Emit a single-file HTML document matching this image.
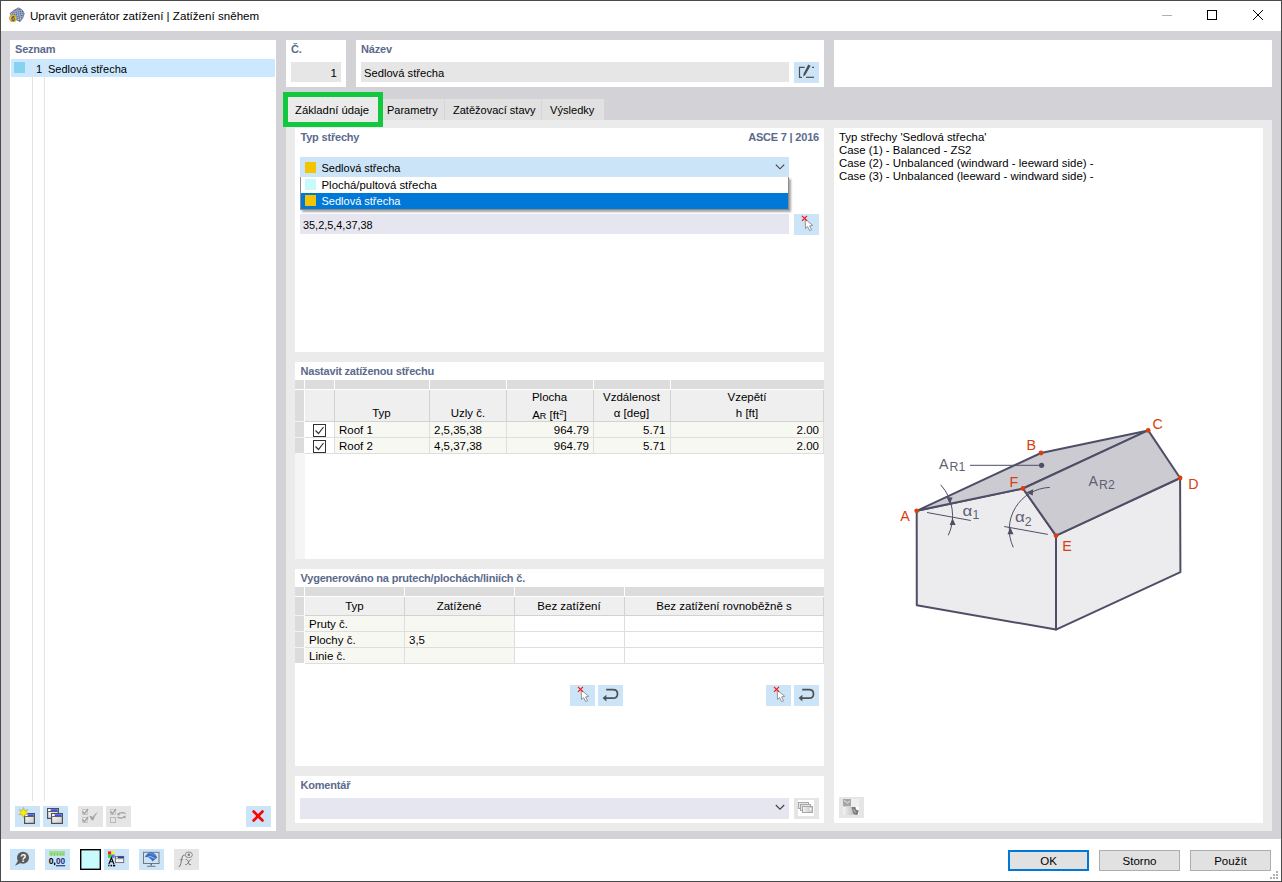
<!DOCTYPE html>
<html><head><meta charset="utf-8">
<style>
*{box-sizing:border-box;margin:0;padding:0}
html,body{width:1282px;height:882px;overflow:hidden;background:#fff}
body{position:relative;font-family:"Liberation Sans",sans-serif;font-size:11.5px;color:#000}
.a{position:absolute}
.t{position:absolute;white-space:nowrap;line-height:14px}
svg{position:absolute;overflow:visible}
</style></head><body>
<div class="a" style="left:0px;top:0px;width:1282px;height:882px;background:#d2d2d7;"></div>
<div class="a" style="left:0px;top:0px;width:1282px;height:1px;background:#4a4a4a;"></div>
<div class="a" style="left:0px;top:881px;width:1282px;height:1px;background:#4a4a4a;"></div>
<div class="a" style="left:0px;top:0px;width:1px;height:882px;background:#4a4a4a;"></div>
<div class="a" style="left:1281px;top:0px;width:1px;height:882px;background:#4a4a4a;"></div>
<div class="a" style="left:1px;top:1px;width:1280px;height:30px;background:#fff;"></div>
<div class="t" style="left:30px;top:9.17px;font-size:11.6px;">Upravit generátor zatížení | Zatížení sněhem</div>
<div class="a" style="left:1px;top:839px;width:1280px;height:42px;background:#fff;"></div>
<div class="a" style="left:10px;top:40px;width:266px;height:791px;background:#fff;"></div>
<div class="t" style="left:15px;top:42.06px;font-size:11px;font-weight:bold;color:#5b6a8c;letter-spacing:-0.2px;">Seznam</div>
<div class="a" style="left:11px;top:59px;width:264px;height:18px;background:#cce8ff;"></div>
<div class="a" style="left:14px;top:62px;width:11px;height:11px;background:#87d2f0;"></div>
<div class="a" style="left:32px;top:59px;width:1px;height:742px;background:#e3e3e3;"></div>
<div class="a" style="left:44px;top:59px;width:1px;height:742px;background:#e3e3e3;"></div>
<div class="t" style="left:36px;top:62.00px;font-size:11.2px;">1</div>
<div class="t" style="left:48px;top:62.06px;font-size:11px;">Sedlová střecha</div>
<div class="a" style="left:286px;top:40px;width:60px;height:47px;background:#fff;"></div>
<div class="t" style="left:291px;top:42.06px;font-size:11px;font-weight:bold;color:#5b6a8c;letter-spacing:-0.2px;">Č.</div>
<div class="a" style="left:291px;top:62px;width:50px;height:20px;background:#e6e6e6;"></div>
<div class="t" style="right:945px;top:65.70px;font-size:11.5px;">1</div>
<div class="a" style="left:356px;top:40px;width:468px;height:47px;background:#fff;"></div>
<div class="t" style="left:361px;top:42.06px;font-size:11px;font-weight:bold;color:#5b6a8c;letter-spacing:-0.2px;">Název</div>
<div class="a" style="left:361px;top:62px;width:428px;height:20px;background:#e6e6e6;"></div>
<div class="t" style="left:364px;top:65.80px;font-size:11.2px;">Sedlová střecha</div>
<div class="a" style="left:794px;top:62px;width:25px;height:21px;background:#cce4f7;"></div>
<div class="a" style="left:834px;top:40px;width:438px;height:47px;background:#fff;"></div>
<div class="a" style="left:286px;top:120px;width:986px;height:711px;background:#ebebeb;"></div>
<div class="a" style="left:383px;top:99px;width:221px;height:21px;background:#e1e1e1;"></div>
<div class="a" style="left:444px;top:99px;width:1px;height:21px;background:#d6d6d6;"></div>
<div class="a" style="left:541px;top:99px;width:1px;height:21px;background:#d6d6d6;"></div>
<div class="t" style="left:387px;top:103.36px;font-size:11px;">Parametry</div>
<div class="t" style="left:453px;top:103.36px;font-size:11px;">Zatěžovací stavy</div>
<div class="t" style="left:550px;top:103.33px;font-size:11.1px;">Výsledky</div>
<div class="a" style="left:283px;top:92px;width:100px;height:35px;border:5px solid #12c83e;background:#ebebeb"></div>
<div class="t" style="left:295px;top:103.27px;font-size:11.3px;">Základní údaje</div>
<div class="a" style="left:295px;top:128px;width:529px;height:224px;background:#fff;"></div>
<div class="t" style="left:300.5px;top:130.36px;font-size:11px;font-weight:bold;color:#5b6a8c;letter-spacing:-0.2px;">Typ střechy</div>
<div class="t" style="right:463px;top:130.36px;font-size:11px;font-weight:bold;color:#5b6a8c;letter-spacing:-0.2px;">ASCE 7 | 2016</div>
<div class="a" style="left:300px;top:157px;width:489px;height:20px;background:#cce4f7;"></div>
<div class="a" style="left:305px;top:162px;width:11px;height:11px;background:#f5c400;"></div>
<div class="t" style="left:321.5px;top:161.36px;font-size:11px;">Sedlová střecha</div>
<svg style="left:0;top:0" width="1282" height="882"><polyline points="775.8,164.6 780,168.8 784.2,164.6" fill="none" stroke="#404040" stroke-width="1.1"/></svg>
<div class="a" style="left:300px;top:214px;width:489px;height:20px;background:#e6e6f0;"></div>
<div class="t" style="left:303px;top:218.40px;font-size:10.9px;">35,2,5,4,37,38</div>
<div class="a" style="left:794px;top:214px;width:25px;height:21px;background:#cce4f7;"></div>
<div class="a" style="left:300px;top:177px;width:489px;height:33px;background:#fff;border:1px solid #8c8c8c;border-top:none;box-shadow:2px 2px 2px rgba(0,0,0,0.35)"></div>
<div class="a" style="left:301px;top:193px;width:487px;height:16px;background:#0078d7;"></div>
<div class="a" style="left:305px;top:179px;width:11px;height:11px;background:#c8fafc;"></div>
<div class="t" style="left:321.5px;top:178.23px;font-size:11.4px;">Plochá/pultová střecha</div>
<div class="a" style="left:305px;top:195px;width:11px;height:11px;background:#f5c400;"></div>
<div class="t" style="left:321.5px;top:194.36px;font-size:11px;color:#fff;">Sedlová střecha</div>
<div class="a" style="left:295px;top:362px;width:529px;height:197px;background:#fff;"></div>
<div class="t" style="left:300.5px;top:364.16px;font-size:11px;font-weight:bold;color:#5b6a8c;letter-spacing:-0.2px;">Nastavit zatíženou střechu</div>
<div class="a" style="left:295px;top:380px;width:9px;height:9px;background:#dcdcdc;"></div>
<div class="a" style="left:295px;top:390px;width:9px;height:63px;background:#dcdcdc;"></div>
<div class="a" style="left:295px;top:421px;width:9px;height:1px;background:#f2f2f2;"></div>
<div class="a" style="left:295px;top:437px;width:9px;height:1px;background:#f2f2f2;"></div>
<div class="a" style="left:305px;top:380px;width:519px;height:9px;background:#dcdcdc;"></div>
<div class="a" style="left:334px;top:380px;width:1px;height:9px;background:#fff;"></div>
<div class="a" style="left:429px;top:380px;width:1px;height:9px;background:#fff;"></div>
<div class="a" style="left:506px;top:380px;width:1px;height:9px;background:#fff;"></div>
<div class="a" style="left:593px;top:380px;width:1px;height:9px;background:#fff;"></div>
<div class="a" style="left:670px;top:380px;width:1px;height:9px;background:#fff;"></div>
<div class="a" style="left:305px;top:390px;width:519px;height:31px;background:#efefef;"></div>
<div class="a" style="left:305px;top:421px;width:519px;height:1px;background:#d2d2d2;"></div>
<div class="a" style="left:335px;top:422px;width:488px;height:31px;background:#f8f8f3;"></div>
<div class="a" style="left:305px;top:437px;width:519px;height:1px;background:#dedede;"></div>
<div class="a" style="left:305px;top:453px;width:519px;height:1px;background:#dedede;"></div>
<div class="a" style="left:334px;top:390px;width:1px;height:31px;background:#d2d2d2;"></div>
<div class="a" style="left:334px;top:422px;width:1px;height:32px;background:#dedede;"></div>
<div class="a" style="left:429px;top:390px;width:1px;height:31px;background:#d2d2d2;"></div>
<div class="a" style="left:429px;top:422px;width:1px;height:32px;background:#dedede;"></div>
<div class="a" style="left:506px;top:390px;width:1px;height:31px;background:#d2d2d2;"></div>
<div class="a" style="left:506px;top:422px;width:1px;height:32px;background:#dedede;"></div>
<div class="a" style="left:593px;top:390px;width:1px;height:31px;background:#d2d2d2;"></div>
<div class="a" style="left:593px;top:422px;width:1px;height:32px;background:#dedede;"></div>
<div class="a" style="left:670px;top:390px;width:1px;height:31px;background:#d2d2d2;"></div>
<div class="a" style="left:670px;top:422px;width:1px;height:32px;background:#dedede;"></div>
<div class="a" style="left:823px;top:390px;width:1px;height:31px;background:#d2d2d2;"></div>
<div class="a" style="left:823px;top:422px;width:1px;height:32px;background:#dedede;"></div>
<div class="a" style="left:295px;top:453px;width:10px;height:106px;background:#f5f5f5;"></div>
<div class="t" style="left:334px;top:405.80px;font-size:11.5px;width:95px;text-align:center;">Typ</div>
<div class="t" style="left:430px;top:405.80px;font-size:11.5px;width:76px;text-align:center;">Uzly č.</div>
<div class="t" style="left:506px;top:390.20px;font-size:11.5px;width:87px;text-align:center;">Plocha</div>
<div class="t" style="left:506px;top:406.20px;font-size:11.5px;width:87px;text-align:center;">A<span style="font-size:9px">R</span> [ft<sup style="font-size:8px;vertical-align:4px">2</sup>]</div>
<div class="t" style="left:593px;top:390.20px;font-size:11.5px;width:77px;text-align:center;">Vzdálenost</div>
<div class="t" style="left:593px;top:406.20px;font-size:11.5px;width:77px;text-align:center;">α [deg]</div>
<div class="t" style="left:670px;top:390.20px;font-size:11.5px;width:154px;text-align:center;">Vzepětí</div>
<div class="t" style="left:670px;top:406.20px;font-size:11.5px;width:154px;text-align:center;">h [ft]</div>
<div class="a" style="left:313px;top:424px;width:13px;height:13px;background:transparent;border:1px solid #333"></div>
<svg style="left:0;top:0" width="1" height="1"><polyline points="315.5,430.5 318.5,433.5 323.5,427" fill="none" stroke="#333" stroke-width="1.2"/></svg>
<div class="t" style="left:339px;top:422.60px;font-size:11.5px;">Roof 1</div>
<div class="t" style="left:434px;top:422.60px;font-size:11.5px;">2,5,35,38</div>
<div class="t" style="right:693px;top:422.60px;font-size:11.5px;">964.79</div>
<div class="t" style="right:616.5px;top:422.60px;font-size:11.5px;">5.71</div>
<div class="t" style="right:463px;top:422.60px;font-size:11.5px;">2.00</div>
<div class="a" style="left:313px;top:440px;width:13px;height:13px;background:transparent;border:1px solid #333"></div>
<svg style="left:0;top:0" width="1" height="1"><polyline points="315.5,446.5 318.5,449.5 323.5,443" fill="none" stroke="#333" stroke-width="1.2"/></svg>
<div class="t" style="left:339px;top:438.60px;font-size:11.5px;">Roof 2</div>
<div class="t" style="left:434px;top:438.60px;font-size:11.5px;">4,5,37,38</div>
<div class="t" style="right:693px;top:438.60px;font-size:11.5px;">964.79</div>
<div class="t" style="right:616.5px;top:438.60px;font-size:11.5px;">5.71</div>
<div class="t" style="right:463px;top:438.60px;font-size:11.5px;">2.00</div>
<div class="a" style="left:295px;top:569px;width:529px;height:197px;background:#fff;"></div>
<div class="t" style="left:300.5px;top:571.36px;font-size:11px;font-weight:bold;color:#5b6a8c;letter-spacing:-0.2px;">Vygenerováno na prutech/plochách/liniích č.</div>
<div class="a" style="left:295px;top:587px;width:9px;height:9px;background:#dcdcdc;"></div>
<div class="a" style="left:295px;top:597px;width:9px;height:66px;background:#dcdcdc;"></div>
<div class="a" style="left:295px;top:615px;width:9px;height:1px;background:#f2f2f2;"></div>
<div class="a" style="left:295px;top:631px;width:9px;height:1px;background:#f2f2f2;"></div>
<div class="a" style="left:295px;top:647px;width:9px;height:1px;background:#f2f2f2;"></div>
<div class="a" style="left:305px;top:587px;width:519px;height:9px;background:#dcdcdc;"></div>
<div class="a" style="left:404px;top:587px;width:1px;height:9px;background:#fff;"></div>
<div class="a" style="left:514px;top:587px;width:1px;height:9px;background:#fff;"></div>
<div class="a" style="left:624px;top:587px;width:1px;height:9px;background:#fff;"></div>
<div class="a" style="left:305px;top:597px;width:519px;height:18px;background:#efefef;"></div>
<div class="a" style="left:305px;top:615px;width:519px;height:1px;background:#d2d2d2;"></div>
<div class="a" style="left:305px;top:616px;width:209px;height:47px;background:#f8f8f3;"></div>
<div class="a" style="left:305px;top:631px;width:519px;height:1px;background:#dedede;"></div>
<div class="a" style="left:305px;top:647px;width:519px;height:1px;background:#dedede;"></div>
<div class="a" style="left:305px;top:663px;width:519px;height:1px;background:#dedede;"></div>
<div class="a" style="left:404px;top:597px;width:1px;height:18px;background:#d2d2d2;"></div>
<div class="a" style="left:404px;top:616px;width:1px;height:48px;background:#dedede;"></div>
<div class="a" style="left:514px;top:597px;width:1px;height:18px;background:#d2d2d2;"></div>
<div class="a" style="left:514px;top:616px;width:1px;height:48px;background:#dedede;"></div>
<div class="a" style="left:624px;top:597px;width:1px;height:18px;background:#d2d2d2;"></div>
<div class="a" style="left:624px;top:616px;width:1px;height:48px;background:#dedede;"></div>
<div class="a" style="left:823px;top:597px;width:1px;height:18px;background:#d2d2d2;"></div>
<div class="a" style="left:823px;top:616px;width:1px;height:48px;background:#dedede;"></div>
<div class="t" style="left:305px;top:598.80px;font-size:11.5px;width:99px;text-align:center;">Typ</div>
<div class="t" style="left:404px;top:598.80px;font-size:11.5px;width:110px;text-align:center;">Zatížené</div>
<div class="t" style="left:514px;top:598.80px;font-size:11.5px;width:110px;text-align:center;">Bez zatížení</div>
<div class="t" style="left:624px;top:598.80px;font-size:11.5px;width:200px;text-align:center;">Bez zatížení rovnoběžně s</div>
<div class="t" style="left:309px;top:617.20px;font-size:11.5px;">Pruty č.</div>
<div class="t" style="left:309px;top:633.20px;font-size:11.5px;">Plochy č.</div>
<div class="t" style="left:409px;top:633.20px;font-size:11.5px;">3,5</div>
<div class="t" style="left:309px;top:649.20px;font-size:11.5px;">Linie č.</div>
<div class="a" style="left:570px;top:685px;width:25px;height:21px;background:#cce4f7;"></div>
<div class="a" style="left:598px;top:685px;width:25px;height:21px;background:#cce4f7;"></div>
<div class="a" style="left:766px;top:685px;width:25px;height:21px;background:#cce4f7;"></div>
<div class="a" style="left:794px;top:685px;width:25px;height:21px;background:#cce4f7;"></div>
<div class="a" style="left:295px;top:776px;width:529px;height:47px;background:#fff;"></div>
<div class="t" style="left:300.5px;top:778.36px;font-size:11px;font-weight:bold;color:#5b6a8c;letter-spacing:-0.2px;">Komentář</div>
<div class="a" style="left:300px;top:798px;width:489px;height:21px;background:#e6e6f0;"></div>
<svg style="left:0;top:0" width="1" height="1"><polyline points="775.8,805 780,809.2 784.2,805" fill="none" stroke="#404040" stroke-width="1.1"/></svg>
<div class="a" style="left:794px;top:798px;width:25px;height:21px;background:#e5e5e5;"></div>
<div class="a" style="left:834px;top:128px;width:429px;height:695px;background:#fff;"></div>
<div class="t" style="left:839px;top:130.23px;font-size:11.4px;">Typ střechy 'Sedlová střecha'</div>
<div class="t" style="left:839px;top:143.23px;font-size:11.4px;">Case (1) - Balanced - ZS2</div>
<div class="t" style="left:839px;top:156.23px;font-size:11.4px;">Case (2) - Unbalanced (windward - leeward side) -</div>
<div class="t" style="left:839px;top:169.23px;font-size:11.4px;">Case (3) - Unbalanced (leeward - windward side) -</div>
<div class="a" style="left:839px;top:797px;width:25px;height:21px;background:#e5e5e5;"></div>
<div class="a" style="left:15px;top:806px;width:25px;height:21px;background:#cce4f7;"></div>
<div class="a" style="left:43px;top:806px;width:25px;height:21px;background:#cce4f7;"></div>
<div class="a" style="left:78px;top:806px;width:25px;height:21px;background:#e5e5e5;"></div>
<div class="a" style="left:106px;top:806px;width:25px;height:21px;background:#e5e5e5;"></div>
<div class="a" style="left:246px;top:806px;width:25px;height:21px;background:#cce4f7;"></div>
<div class="a" style="left:10px;top:849px;width:25px;height:21px;background:#cce4f7;"></div>
<div class="a" style="left:45px;top:849px;width:25px;height:21px;background:#cce4f7;"></div>
<svg style="left:0;top:0" width="1" height="1"><rect x="80.7" y="849.7" width="19.6" height="19.6" fill="#c8fcfc" stroke="#000" stroke-width="1.4"/></svg>
<div class="a" style="left:104px;top:849px;width:25px;height:21px;background:#cce4f7;"></div>
<div class="a" style="left:139px;top:849px;width:25px;height:21px;background:#cce4f7;"></div>
<div class="a" style="left:174px;top:849px;width:25px;height:21px;background:#e5e5e5;"></div>
<div class="a" style="left:1008px;top:850px;width:81px;height:21px;border:2px solid #0078d7;background:#e1e1e1"></div>
<div class="t" style="left:1008px;top:854.20px;font-size:11.5px;width:81px;text-align:center;">OK</div>
<div class="a" style="left:1099px;top:850px;width:81px;height:21px;border:1px solid #adadad;background:#e1e1e1"></div>
<div class="t" style="left:1099px;top:854.20px;font-size:11.5px;width:81px;text-align:center;">Storno</div>
<div class="a" style="left:1190px;top:850px;width:81px;height:21px;border:1px solid #adadad;background:#e1e1e1"></div>
<div class="t" style="left:1190px;top:854.20px;font-size:11.5px;width:81px;text-align:center;">Použít</div>
<svg style="left:0;top:0" width="1282" height="882" viewBox="0 0 1282 882">
<defs><linearGradient id="wg" x1="0" y1="0" x2="1" y2="1"><stop offset="0" stop-color="#ffffff"/><stop offset="1" stop-color="#c8c8c8"/></linearGradient></defs>
<rect x="24.6" y="813.6" width="9.8" height="9.8" fill="url(#wg)" stroke="#505050" stroke-width="1.2"/><rect x="25.2" y="814.2" width="8.6" height="1.8" fill="#fff"/><rect x="27.6" y="814.2" width="6.2" height="1.8" fill="#3c50f0"/><rect x="25.2" y="816" width="8.6" height="0.9" fill="#505050"/>
<polygon points="23.5,807.5 24.6,810.6 27.8,809.6 25.7,812.2 28.3,814.5 25,814.6 23.5,817.5 22,814.6 18.8,814.5 21.3,812.2 19.2,809.6 22.4,810.6" fill="#ffee00" stroke="#9a9a40" stroke-width="0.5"/>
<rect x="47.6" y="808.6" width="10.8" height="9.8" fill="url(#wg)" stroke="#505050" stroke-width="1.2"/><rect x="48.2" y="809.2" width="9.6" height="1.8" fill="#fff"/><rect x="50.6" y="809.2" width="7.2" height="1.8" fill="#3c50f0"/><rect x="48.2" y="811" width="9.6" height="0.9" fill="#505050"/>
<rect x="51.6" y="813.6" width="10.8" height="9.8" fill="url(#wg)" stroke="#505050" stroke-width="1.2"/><rect x="52.2" y="814.2" width="9.6" height="1.8" fill="#fff"/><rect x="54.6" y="814.2" width="7.2" height="1.8" fill="#3c50f0"/><rect x="52.2" y="816" width="9.6" height="0.9" fill="#505050"/>
<g fill="none" stroke="#a0a0a0" stroke-width="1"><rect x="82.5" y="809.5" width="5" height="5" stroke="#c8c8c8"/><rect x="82.5" y="817.5" width="5" height="5" stroke="#c8c8c8"/><polyline points="82.5,811.5 84.5,813.8 88,809" stroke-width="1.3"/><polyline points="82.5,819.5 84.5,821.8 88,817" stroke-width="1.3"/></g>
<path d="M89.6,816.2 Q91.5,815.6 92.6,817.3 Q94.5,813.8 98,811.8 Q95.2,815 93,820.6 Q91.6,820.8 89.6,816.2 Z" fill="#a0a0a0"/>
<g fill="none" stroke="#a0a0a0" stroke-width="1"><rect x="110.5" y="809.5" width="5" height="5" stroke="#c8c8c8"/><rect x="110.5" y="817.5" width="5" height="5" stroke="#b8b8b8"/><polyline points="110.5,811.5 112.5,813.8 116,809" stroke-width="1.3"/><path d="M117.5,814.5 Q121,811.5 125.5,813.5" stroke-width="1.3"/><path d="M117.5,817 Q121,819.5 125,816.5" stroke-width="1.3"/></g>
<polygon points="117,815 119.5,812.5 119.5,815.5" fill="#a0a0a0"/><polygon points="125.5,815.5 125.5,818.5 123,817" fill="#a0a0a0"/>
<g stroke="#ff0000" stroke-width="2.6" stroke-linecap="round"><line x1="253.6" y1="811.5" x2="262.5" y2="820.5"/><line x1="262.5" y1="811.5" x2="253.6" y2="820.5"/></g>
<g fill="none" stroke="#505050" stroke-width="1.2"><polyline points="804.6,67.3 799.5,67.3 799.5,77.3 802,77.3"/><line x1="806" y1="77.3" x2="814" y2="77.3"/><line x1="812" y1="67.3" x2="814" y2="67.3"/></g>
<polygon points="808.3,64.5 810.6,65.8 805.3,75 803.3,76.8 803.5,73.7" fill="#505050"/>
<polygon points="805.2,219 805.5,228.5 807.6,226.6 809.6,230.6 811.6,229.8 809.6,225.9 812.7,225.3" fill="#fff" stroke="#8a8a8a" stroke-width="0.9" stroke-linejoin="round"/><g stroke="#ff1010" stroke-width="1.2"><line x1="802" y1="215.8" x2="807" y2="220.8"/><line x1="807" y1="215.8" x2="802" y2="220.8"/></g>
<polygon points="581.2,690 581.5,699.5 583.6,697.6 585.6,701.6 587.6,700.8 585.6,696.9 588.7,696.3" fill="#fff" stroke="#8a8a8a" stroke-width="0.9" stroke-linejoin="round"/><g stroke="#ff1010" stroke-width="1.2"><line x1="578" y1="686.8" x2="583" y2="691.8"/><line x1="583" y1="686.8" x2="578" y2="691.8"/></g>
<polygon points="777.2,690 777.5,699.5 779.6,697.6 781.6,701.6 783.6,700.8 781.6,696.9 784.7,696.3" fill="#fff" stroke="#8a8a8a" stroke-width="0.9" stroke-linejoin="round"/><g stroke="#ff1010" stroke-width="1.2"><line x1="774" y1="686.8" x2="779" y2="691.8"/><line x1="779" y1="686.8" x2="774" y2="691.8"/></g>
<path d="M606.2,689.7 L613,689.7 Q617.5,689.7 617.5,693.9 Q617.5,698.1 613,698.1 L606,698.1" fill="none" stroke="#505050" stroke-width="1.7"/><polygon points="602.6,698.1 606.4,694.8 606.4,701.4" fill="#505050"/>
<path d="M802.2,689.7 L809,689.7 Q813.5,689.7 813.5,693.9 Q813.5,698.1 809,698.1 L802,698.1" fill="none" stroke="#505050" stroke-width="1.7"/><polygon points="798.6,698.1 802.4,694.8 802.4,701.4" fill="#505050"/>
<rect x="798" y="800" width="16" height="16" fill="#fff"/>
<g stroke="#a0a0a0" stroke-width="0.9" fill="#e6e6e6"><rect x="798.5" y="802.5" width="10" height="6"/><rect x="800.5" y="804.5" width="10" height="6"/><rect x="802.5" y="806.5" width="10" height="6" fill="url(#rg)"/></g><polygon points="809.5,808.5 811.5,808 810.8,811.5" fill="#fff"/>
<defs><linearGradient id="rg" x1="0" y1="0" x2="1" y2="0"><stop offset="0" stop-color="#f4f4f4"/><stop offset="1" stop-color="#c4c4c4"/></linearGradient></defs>
<rect x="843" y="799" width="16" height="16" fill="#fff"/><rect x="843" y="807" width="10" height="8" fill="url(#rg)"/><rect x="851" y="799" width="8" height="8" fill="#efefef"/><rect x="843" y="799" width="8" height="7.5" fill="#a6a6a6"/><polyline points="844,800.5 847.5,803 849.8,801.2 M844.5,805 849.5,805" fill="none" stroke="#f0f0f0" stroke-width="0.9"/><path d="M851.5,807 L855.5,807 L856,809.5 L858.8,810.5 L857.5,815 L853.5,814.5 Z" fill="#7c7c7c"/><path d="M853.6,809.5 L855.5,812.5" stroke="#e0e0e0" stroke-width="0.8"/>
<circle cx="23" cy="857.8" r="6" fill="#5a5a5a"/><polygon points="15,865.7 18.5,860 21.5,862.5" fill="#5a5a5a"/>
<text x="20.3" y="861.5" font-family="Liberation Sans" font-weight="bold" font-size="10" fill="#fff">?</text>
<rect x="49" y="851" width="16" height="4.7" fill="#9be085"/><g stroke="#70b060" stroke-width="0.6"><line x1="51.5" y1="853" x2="51.5" y2="855.7"/><line x1="54.5" y1="853" x2="54.5" y2="855.7"/><line x1="57.5" y1="853" x2="57.5" y2="855.7"/><line x1="60.5" y1="853" x2="60.5" y2="855.7"/><line x1="63" y1="853" x2="63" y2="855.7"/></g>
<text x="48.8" y="864.3" font-family="Liberation Sans" font-weight="bold" font-size="9.5" fill="#000" textLength="4.8" lengthAdjust="spacingAndGlyphs">0</text><rect x="53.9" y="862.6" width="1.4" height="2.6" fill="#000"/><text x="56" y="864.3" font-family="Liberation Sans" font-weight="bold" font-size="9.5" fill="#1d2e80" textLength="9.2" lengthAdjust="spacingAndGlyphs">00</text><rect x="56" y="865.2" width="9.2" height="1.1" fill="#1d2e80"/>
<rect x="108" y="851.4" width="3.3" height="3.2" fill="#ff1a1a"/><rect x="111.3" y="851.4" width="3.3" height="3.2" fill="#f5f020"/><rect x="108" y="854.6" width="3.3" height="3.2" fill="#20dd20"/><rect x="111.3" y="854.6" width="3.3" height="3.2" fill="#5a6af5"/>
<path d="M108.8,864.2 L111.4,857.8 L114,864.2 M109.8,861.8 L113,861.8" fill="none" stroke="#000" stroke-width="1.1"/><rect x="108.3" y="864.8" width="1.1" height="1.6" fill="#000"/><rect x="110.5" y="864.8" width="1.6" height="1.6" fill="#000"/><rect x="113" y="864.8" width="2.2" height="1.6" fill="#000"/>
<rect x="115.5" y="856.4" width="8.2" height="6.2" fill="#f4f4f4" stroke="#6a6a6a" stroke-width="0.9"/><rect x="117.6" y="856.4" width="6.1" height="1.9" fill="#2535a8"/><rect x="116" y="856.9" width="1.5" height="1.3" fill="#ddd"/><rect x="116" y="858.5" width="7.3" height="0.6" fill="#777"/>
<rect x="143.5" y="852.3" width="15.5" height="11.2" fill="none" stroke="#777" stroke-width="1"/><rect x="150.5" y="863.5" width="1.5" height="2" fill="#666"/><rect x="147" y="865.8" width="8.5" height="1" fill="#777"/>
<path d="M144.8,857 Q147.5,852.3 151,852.2 Q155,852.6 157.2,857.4 L152.6,861.6 Q150.5,857.2 144.8,857 Z" fill="#3c6fc4"/><path d="M147,857.5 Q150.5,855 154.5,858.5" fill="none" stroke="#c0d8f4" stroke-width="0.8"/><path d="M149,853.5 Q152,853.5 154.5,855.5" fill="none" stroke="#7aa8e8" stroke-width="0.6"/>
<path d="M178.6,866.6 Q180.3,867 180.8,863.5 L182.2,857 Q182.8,854.6 184.6,855.3" fill="none" stroke="#6e6e6e" stroke-width="0.9"/><rect x="179.7" y="859.4" width="3.4" height="0.7" fill="#7a7a7a"/>
<path d="M185.5,859.6 Q187,859 187.8,860.5 L189,864 Q189.6,865.3 191,864.5 M185.2,864.6 Q186.5,865.3 187.8,863.5 L189.5,860.5 Q190.3,859.3 191.3,859.8" fill="none" stroke="#6e6e6e" stroke-width="0.85"/>
<ellipse cx="188.8" cy="854.8" rx="3.6" ry="2.8" fill="none" stroke="#7a7a7a" stroke-width="0.8"/><circle cx="188.8" cy="854.8" r="1.2" fill="#7a7a7a"/>
<defs><pattern id="chk" width="3" height="3" patternUnits="userSpaceOnUse" patternTransform="rotate(35)"><rect width="3" height="3" fill="#4a5a8c"/><rect width="1.5" height="1.5" fill="#c8d4f0"/><rect x="1.5" y="1.5" width="1.5" height="1.5" fill="#c8d4f0"/></pattern></defs>
<path d="M10,13.5 Q14,9.5 18.5,7.8 Q23,9.5 24.3,13.5 Q23.5,18.5 20,21.8 L12.5,17.5 Z" fill="url(#chk)" stroke="#3a4670" stroke-width="0.5"/>
<circle cx="13" cy="18.3" r="3.6" fill="#f2c418" stroke="#9a8a30" stroke-width="0.5"/><text x="11" y="21" font-family="Liberation Sans" font-weight="bold" font-size="7" fill="#3a4a80">6</text>
<line x1="1162" y1="15.5" x2="1172" y2="15.5" stroke="#b0b0b0" stroke-width="1"/>
<rect x="1207.5" y="10.5" width="9" height="9" fill="none" stroke="#000" stroke-width="1"/>
<g stroke="#000" stroke-width="1"><line x1="1253" y1="10" x2="1263" y2="20"/><line x1="1263" y1="10" x2="1253" y2="20"/></g>
<rect x="1276" y="877" width="2" height="2" fill="#b0b0b0"/>
<rect x="1276" y="874" width="2" height="2" fill="#b0b0b0"/>
<rect x="1273" y="877" width="2" height="2" fill="#b0b0b0"/>
<rect x="1276" y="871" width="2" height="2" fill="#b0b0b0"/>
<rect x="1273" y="874" width="2" height="2" fill="#b0b0b0"/>
<rect x="1270" y="877" width="2" height="2" fill="#b0b0b0"/>
</svg>
<svg style="left:0;top:0" width="1282" height="882" viewBox="0 0 1282 882">
<g stroke-linejoin="round" stroke-linecap="round">
<polygon points="916.7,510.8 1023,488.5 1056,535.6 1056,629.6 916.8,605.2" fill="#ececef" stroke="#4e4f66" stroke-width="2"/>
<polygon points="1056,535.6 1180.1,478 1180.4,572.2 1056,629.6" fill="#ececef" stroke="#4e4f66" stroke-width="2"/>
<polygon points="916.7,510.8 1041,453 1148.2,430.4 1023,488.5" fill="#cbcbd1" stroke="#4e4f66" stroke-width="2"/>
<polygon points="1023,488.5 1148.2,430.4 1180.1,478 1056,535.6" fill="#cbcbd1" stroke="#4e4f66" stroke-width="2"/>
</g>
<g fill="none" stroke="#4e4f66" stroke-width="1">
<line x1="969.9" y1="465.3" x2="1041.6" y2="465.3"/>
<line x1="927" y1="512.5" x2="970.8" y2="520.5"/>
<line x1="1004.2" y1="526.5" x2="1047.8" y2="534.4"/>
<path d="M940.7,484.8 A46.3,46.3 0 0 1 948.3,535.3"/>
<path d="M1049.8,487.4 A42.1,42.1 0 0 0 1013.3,547.4"/>
</g>
<circle cx="1041.6" cy="465.3" r="2.6" fill="#4e4f66"/>
<g fill="#4e4f66">
<polygon points="949.8,504 946.6,497.3 952.6,497.6"/>
<polygon points="952.6,518.3 949.6,525 955.6,525"/>
<polygon points="1026.2,492.6 1033.2,489.3 1032.8,495.6"/>
<polygon points="1010.4,527.6 1007.5,534.2 1013.5,534.2"/>
</g>
<g fill="#d9400e">
<circle cx="916.7" cy="510.8" r="2.4"/>
<circle cx="1041" cy="453" r="2.4"/>
<circle cx="1148.2" cy="430.4" r="2.4"/>
<circle cx="1180.1" cy="478" r="2.4"/>
<circle cx="1056" cy="535.6" r="2.4"/>
<circle cx="1023" cy="488.5" r="2.4"/>
</g>
<g font-family="Liberation Sans" fill="#d9400e" font-size="14.3">
<text x="900.3" y="520.8">A</text>
<text x="1026.6" y="450.3">B</text>
<text x="1152.5" y="429">C</text>
<text x="1188.3" y="489.1">D</text>
<text x="1062.2" y="550.9">E</text>
<text x="1009.6" y="487.4">F</text>
</g>
<g font-family="Liberation Sans" fill="#5e5f74">
<text x="939" y="468.7" font-size="14.2">A</text><text x="949.6" y="471.4" font-size="12.3">R1</text>
<text x="1088.5" y="485.7" font-size="14.2">A</text><text x="1099" y="488.8" font-size="12.3">R2</text>
<text x="962.6" y="516.3" font-size="14.5" textLength="9.8" lengthAdjust="spacingAndGlyphs">α</text><text x="972.5" y="519.3" font-size="12.3">1</text>
<text x="1015" y="522.4" font-size="14.5" textLength="9.8" lengthAdjust="spacingAndGlyphs">α</text><text x="1024.8" y="525.6" font-size="12.3">2</text>
</g>
</svg>
</body></html>
